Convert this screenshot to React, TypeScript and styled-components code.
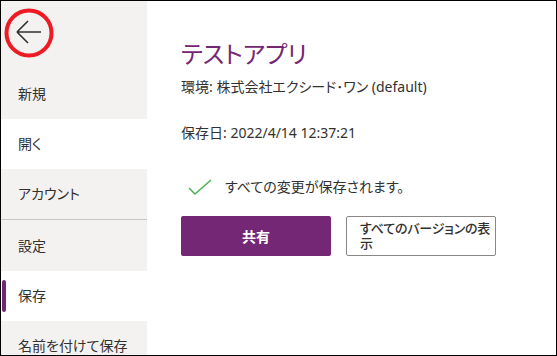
import React from "react";
import styled, { createGlobalStyle } from "styled-components";

/* ================================
   GLOBAL
================================ */

const GlobalStyle = createGlobalStyle`
  html, body {
    margin: 0;
    padding: 0;
    background: #ffffff;
  }

  body {
    font-family: "Noto Sans", "Noto Sans CJK JP", sans-serif;
    font-feature-settings: "palt";
    color: #323130;
  }

  * {
    box-sizing: border-box;
  }
`;

/* ================================
   FRAME
================================ */

const Frame = styled.div`
  width: 557px;
  height: 356px;
  border: 1px solid #000000;
  display: flex;
  overflow: hidden;
  background: #ffffff;
`;

/* ================================
   SIDEBAR
================================ */

const Sidebar = styled.nav`
  width: 146px;
  flex-shrink: 0;
  background: #f3f2f1;
  display: flex;
  flex-direction: column;
`;

const BackButton = styled.button`
  position: relative;
  flex-shrink: 0;
  height: 68px;
  border: none;
  background: transparent;
  padding: 0;
  display: flex;
  align-items: flex-start;
  cursor: pointer;

  svg {
    display: block;
  }
`;

/* anel vermelho de anotação por cima do botão */
const Highlight = styled.svg`
  position: absolute;
  left: 2px;
  top: 7px;
`;

const NavItem = styled.div<{ $active?: boolean; $current?: boolean }>`
  position: relative;
  flex-shrink: 0;
  height: 50px;
  display: flex;
  align-items: center;
  padding: 0 0 3px 17px;
  font-size: 14px;
  background: ${(p) => (p.$active ? "#ffffff" : "transparent")};
  color: #323130;

  ${(p) =>
    p.$current &&
    `
    &::before {
      content: "";
      position: absolute;
      left: 1px;
      top: 9px;
      width: 4px;
      height: 32px;
      border-radius: 2px;
      background: #742774;
    }
  `}
`;

const Divider = styled.div`
  flex-shrink: 0;
  height: 1px;
  margin: 0 0 1px;
  background: #c8c6c4;
`;

/* ================================
   MAIN CONTENT
================================ */

const Main = styled.main`
  flex: 1;
  padding: 37px 0 0 34px;
  display: flex;
  flex-direction: column;
`;

const Title = styled.h1`
  margin: 0;
  font-size: 24px;
  font-weight: 400;
  line-height: 32px;
  color: #742774;
`;

const Meta = styled.p<{ $gap: number }>`
  margin: ${(p) => p.$gap}px 0 0;
  font-size: 14px;
  line-height: 20px;
`;

const Status = styled.div`
  margin-top: 34px;
  display: flex;
  align-items: center;
  gap: 13px;
  font-size: 14px;
  line-height: 20px;
  padding-left: 7px;
`;

const Actions = styled.div`
  margin-top: 19px;
  display: flex;
  gap: 15px;
`;

const PrimaryButton = styled.button`
  width: 150px;
  height: 40px;
  border: none;
  border-radius: 2px;
  background: #742774;
  color: #ffffff;
  font-family: inherit;
  font-size: 14px;
  font-weight: 700;
  cursor: pointer;
`;

const SecondaryButton = styled.button`
  width: 150px;
  height: 40px;
  border: 1px solid #8a8886;
  border-radius: 2px;
  background: #ffffff;
  color: #323130;
  font-family: inherit;
  font-feature-settings: "palt";
  font-size: 13px;
  font-weight: 500;
  line-height: 15px;
  letter-spacing: -0.2px;
  text-align: left;
  word-break: break-all;
  padding: 0 2px 0 13px;
  cursor: pointer;
`;

export default function App() {
  return (
    <>
      <GlobalStyle />
      <Frame>
        <Sidebar>
          <BackButton aria-label="戻る">
            <svg width="56" height="64" viewBox="0 0 56 64">
              <path
                d="M16 31 H40 M16 31 L27 20 M16 31 L27 42"
                stroke="#323130"
                strokeWidth="1.6"
                fill="none"
              />
            </svg>
            <Highlight width="52" height="52" viewBox="0 0 52 52">
              <circle cx="26" cy="25" r="22.5" stroke="#ed1c24" strokeWidth="4" fill="none" />
            </Highlight>
          </BackButton>
          <NavItem>新規</NavItem>
          <NavItem $active>開く</NavItem>
          <NavItem>アカウント</NavItem>
          <Divider />
          <NavItem>設定</NavItem>
          <NavItem $active $current>
            保存
          </NavItem>
          <NavItem>名前を付けて保存</NavItem>
        </Sidebar>

        <Main>
          <Title>テストアプリ</Title>
          <Meta $gap={7}>環境: 株式会社エクシード･ワン (default)</Meta>
          <Meta $gap={26}>保存日: 2022/4/14 12:37:21</Meta>
          <Status>
            <svg width="24" height="18" viewBox="0 0 24 18">
              <polyline
                points="1,10 7,16 23,2"
                stroke="#4caf50"
                strokeWidth="1.5"
                fill="none"
              />
            </svg>
            すべての変更が保存されます。
          </Status>
          <Actions>
            <PrimaryButton>共有</PrimaryButton>
            <SecondaryButton>すべてのバージョンの表示</SecondaryButton>
          </Actions>
        </Main>
      </Frame>
    </>
  );
}
